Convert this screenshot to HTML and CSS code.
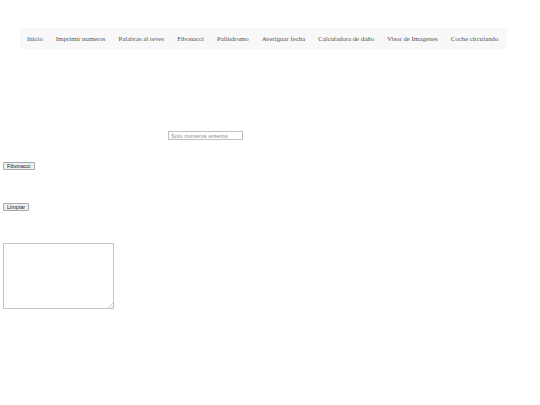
FILE: index.html
```html
<!DOCTYPE html>
<html lang="es">
<head>
<meta charset="utf-8">
<title>Fibonacci</title>
<link rel="stylesheet" href="styles.css">
</head>
<body>
<nav class="menu">
  <a class="menu-link" href="#">Inicio</a>
  <a class="menu-link" href="#">Imprimir numeros</a>
  <a class="menu-link" href="#">Palabras al reves</a>
  <a class="menu-link" href="#">Fibonacci</a>
  <a class="menu-link" href="#">Palindromo</a>
  <a class="menu-link" href="#">Averiguar fecha</a>
  <a class="menu-link" href="#">Calculadora de daño</a>
  <a class="menu-link" href="#">Visor de Imagenes</a>
  <a class="menu-link" href="#">Coche circulando</a>
</nav>
<main class="content">
  <div class="field-row">
    <input class="number-input" type="text" placeholder="Solo numeros enteros">
  </div>
  <div class="button-row first">
    <button class="btn" type="button">Fibonacci</button>
  </div>
  <div class="button-row second">
    <button class="btn" type="button">Limpiar</button>
  </div>
  <div class="result-row">
    <textarea class="result"></textarea>
  </div>
</main>
</body>
</html>
```
FILE: styles.css
```css
html, body {
  margin: 0;
  padding: 0;
  background: #ffffff;
}

body {
  font-family: "Liberation Serif", "Times New Roman", serif;
}

.menu {
  box-sizing: border-box;
  margin: 28px 0 0 20px;
  width: 487px;
  height: 21px;
  background: #f8f8f8;
  display: flex;
  align-items: center;
  gap: 13px;
  padding-left: 7px;
}

.menu-link {
  font-size: 6.8px;
  color: #555555;
  text-decoration: none;
  white-space: nowrap;
}

.content {
  display: flex;
  flex-direction: column;
  align-items: flex-start;
}

.field-row {
  margin-top: 82px;
  padding-left: 168px;
}

.number-input {
  box-sizing: border-box;
  display: block;
  width: 75px;
  height: 9px;
  margin: 0;
  padding: 0 2px;
  border: 1px solid #c0c0c0;
  font-family: "Liberation Sans", Arial, sans-serif;
  font-size: 5.8px;
  color: #333333;
  outline: none;
}

.number-input::placeholder {
  color: #8a8a8a;
}

.button-row {
  padding-left: 3px;
}

.button-row.first {
  margin-top: 22px;
}

.button-row.second {
  margin-top: 33px;
}

.btn {
  box-sizing: border-box;
  display: block;
  height: 8px;
  margin: 0;
  padding: 0 3px;
  border: 1px solid #a8a8a8;
  border-radius: 1px;
  background: #efefef;
  font-family: "Liberation Sans", Arial, sans-serif;
  font-size: 5.5px;
  line-height: 6px;
  color: #222222;
}

.result-row {
  margin-top: 32px;
  padding-left: 3px;
}

.result {
  box-sizing: border-box;
  display: block;
  width: 111px;
  height: 66px;
  margin: 0;
  border: 1px solid #c4c4c4;
  resize: both;
}

.result::-webkit-resizer {
  background: linear-gradient(135deg, transparent 45%, #cfcfcf 45%, #cfcfcf 58%, transparent 58%, transparent 72%, #cfcfcf 72%, #cfcfcf 85%, transparent 85%) no-repeat right bottom / 5px 5px;
}
```
